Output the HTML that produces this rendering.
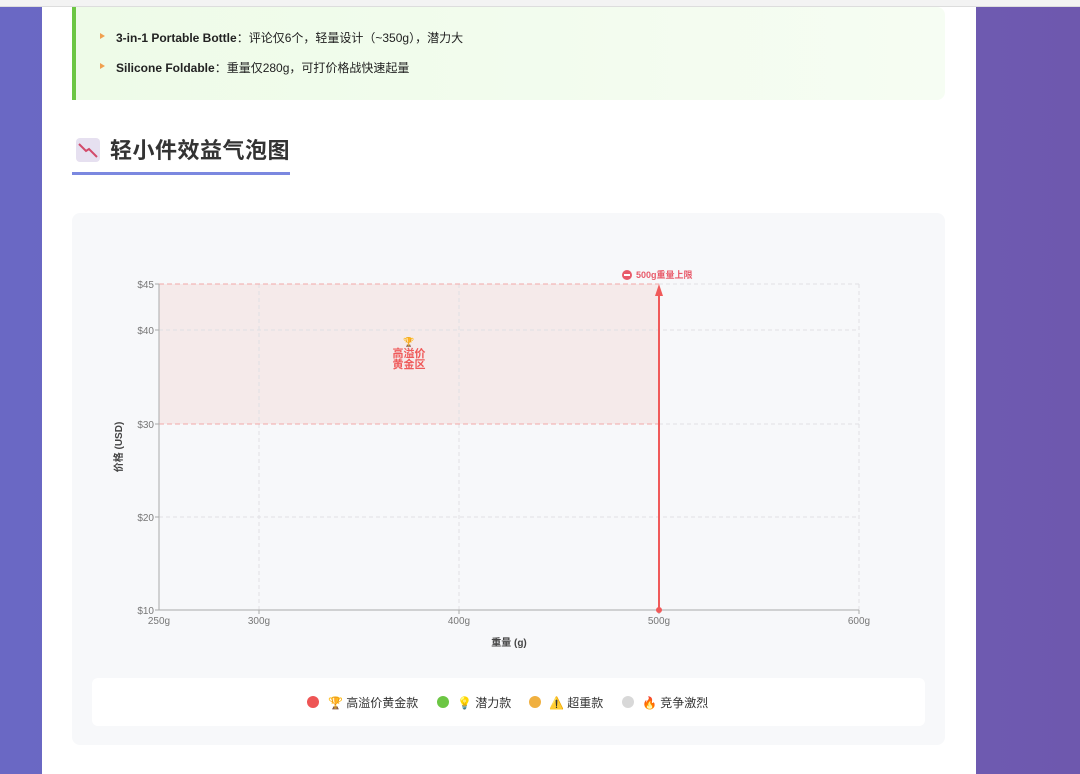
<!DOCTYPE html>
<html><head><meta charset="utf-8"><style>
*{margin:0;padding:0;box-sizing:border-box}
body{width:1080px;height:774px;overflow:hidden;font-family:"Liberation Sans","Noto Sans CJK SC",sans-serif;background:linear-gradient(90deg,#6a68c4 0%,#6d62bb 50%,#6e58ae 100%);position:relative}
.top{position:absolute;left:0;top:0;width:1080px;height:7px;background:#f3f3f3;border-bottom:1px solid #ddd}
.page{position:absolute;left:42px;top:7px;width:934px;height:767px;background:#fff}
.box{position:absolute;left:30px;top:0;width:873px;height:93px;background:linear-gradient(90deg,#eefbe8,#f6fdf3);border-left:4px solid #6cc644;border-radius:0 8px 8px 0}
.li{position:absolute;left:40px;font-size:12px;color:#222}
.li:before{content:"";position:absolute;left:-16px;top:4px;border-left:5px solid #f0a050;border-top:3px solid transparent;border-bottom:3px solid transparent}
h2{position:absolute;left:30px;top:126px;font-size:22px;font-weight:bold;color:#333;padding-bottom:8px;border-bottom:3px solid #7b88e0;width:218px;height:42px;letter-spacing:0.5px;white-space:nowrap}
.chart{position:absolute;left:30px;top:206px;width:873px;height:532px;background:#f7f8fa;border-radius:8px}
</style></head><body>
<div class="top"></div>
<div class="page">
<div class="box">
<div class="li" style="top:22px"><b>3-in-1 Portable Bottle</b>：评论仅6个，轻量设计（~350g），潜力大</div>
<div class="li" style="top:52px"><b>Silicone Foldable</b>：重量仅280g，可打价格战快速起量</div>
</div>
<h2><span style="display:inline-block;width:24px;height:24px;background:#e6e0f0;border-radius:4px;vertical-align:-4px;margin-left:4px;margin-right:10px;position:relative"><svg width="24" height="24"><path d="M3 6 L10 13 L13 11 L21 19" stroke="#d24a6a" stroke-width="2" fill="none"/></svg></span>轻小件效益气泡图</h2>
<div class="chart"></div>
</div>
<svg style="position:absolute;left:0;top:0" width="1080" height="774" font-family="Liberation Sans,Noto Sans CJK SC,sans-serif">
<rect x="159" y="284" width="500" height="140" fill="#f5eaea"/>
<g stroke="#e0e0e4" stroke-dasharray="4 3" stroke-width="1">
<line x1="159" y1="330" x2="859" y2="330"/><line x1="159" y1="517" x2="859" y2="517"/>
<line x1="259" y1="284" x2="259" y2="610"/><line x1="459" y1="284" x2="459" y2="610"/><line x1="859" y1="284" x2="859" y2="610"/>
<line x1="659" y1="284" x2="859" y2="284"/><line x1="659" y1="424" x2="859" y2="424"/>
</g>
<g stroke="#f2a8a8" stroke-dasharray="5 3"><line x1="159" y1="284" x2="659" y2="284"/><line x1="159" y1="424" x2="659" y2="424"/></g>
<line x1="159" y1="284" x2="159" y2="610" stroke="#aaa"/><line x1="159" y1="610" x2="859" y2="610" stroke="#aaa"/>
<g stroke="#aaa"><line x1="155" y1="284" x2="159" y2="284"/><line x1="155" y1="330" x2="159" y2="330"/><line x1="155" y1="424" x2="159" y2="424"/><line x1="155" y1="517" x2="159" y2="517"/><line x1="155" y1="610" x2="159" y2="610"/>
<line x1="259" y1="610" x2="259" y2="614"/><line x1="459" y1="610" x2="459" y2="614"/><line x1="659" y1="610" x2="659" y2="614"/><line x1="859" y1="610" x2="859" y2="614"/></g>
<g font-size="10" fill="#777" text-anchor="end"><text x="154" y="288">$45</text><text x="154" y="334">$40</text><text x="154" y="428">$30</text><text x="154" y="521">$20</text><text x="154" y="614">$10</text></g>
<g font-size="10" fill="#777" text-anchor="middle"><text x="159" y="624">250g</text><text x="259" y="624">300g</text><text x="459" y="624">400g</text><text x="659" y="624">500g</text><text x="859" y="624">600g</text></g>
<text x="509" y="646" font-size="10" font-weight="bold" fill="#444" text-anchor="middle">重量 (g)</text>
<text transform="translate(122,447) rotate(-90)" font-size="10" font-weight="bold" fill="#444" text-anchor="middle">价格 (USD)</text>
<line x1="659" y1="610" x2="659" y2="292" stroke="#f05a5a" stroke-width="2"/>
<path d="M659 284 L655 296 L663 296Z" fill="#f05a5a"/><circle cx="659" cy="610" r="3" fill="#f05a5a"/>
<circle cx="627" cy="275" r="5" fill="#e85a6a"/><rect x="624" y="274" width="6" height="2" fill="#fff"/>
<text x="636" y="278" font-size="9" font-weight="bold" fill="#e85a6a">500g重量上限</text>
<text x="409" y="345" font-size="9" text-anchor="middle">🏆</text>
<text x="409" y="357" font-size="11" font-weight="bold" fill="#ef5a5a" text-anchor="middle">高溢价</text>
<text x="409" y="368" font-size="11" font-weight="bold" fill="#ef5a5a" text-anchor="middle">黄金区</text>
</svg>
<div style="position:absolute;left:92px;top:678px;width:833px;height:48px;background:#fff;border-radius:6px;font-size:12px;color:#333">
<span style="position:absolute;left:215px;top:18px;width:12px;height:12px;border-radius:50%;background:#ee5555"></span><span style="position:absolute;left:236px;top:16px">🏆 高溢价黄金款</span>
<span style="position:absolute;left:345px;top:18px;width:12px;height:12px;border-radius:50%;background:#6cc644"></span><span style="position:absolute;left:365px;top:16px">💡 潜力款</span>
<span style="position:absolute;left:437px;top:18px;width:12px;height:12px;border-radius:50%;background:#f0b040"></span><span style="position:absolute;left:457px;top:16px">⚠️ 超重款</span>
<span style="position:absolute;left:530px;top:18px;width:12px;height:12px;border-radius:50%;background:#d8d8d8"></span><span style="position:absolute;left:550px;top:16px">🔥 竞争激烈</span>
</div>
</body></html>
